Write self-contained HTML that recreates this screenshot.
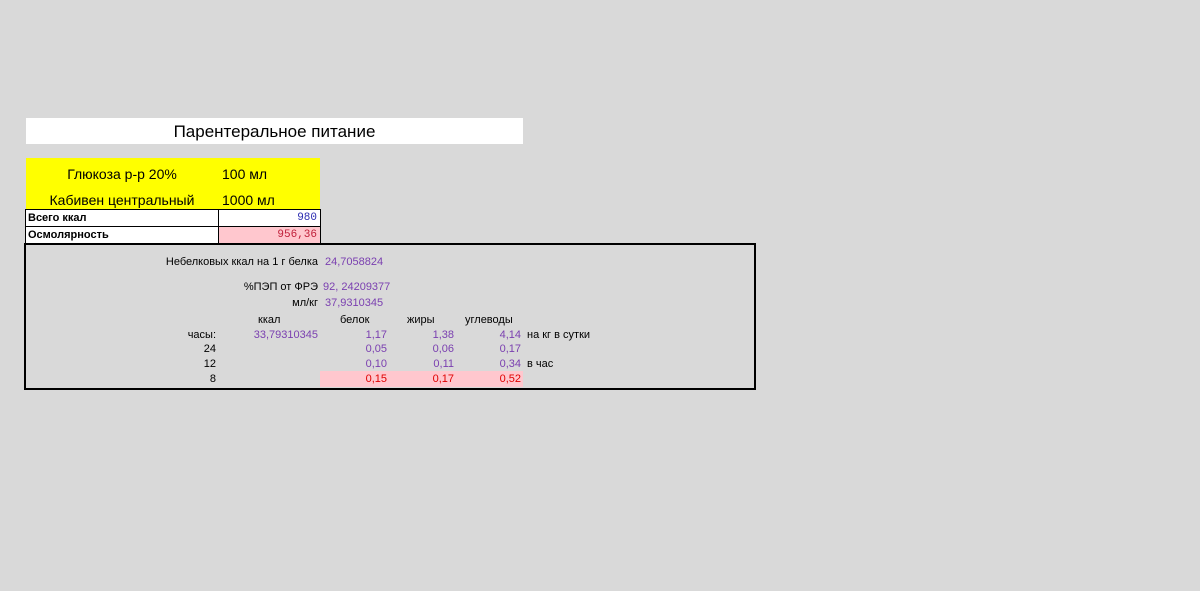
<!DOCTYPE html>
<html><head><meta charset="utf-8"><style>
body{margin:0;width:1200px;height:591px;background:#d9d9d9;position:relative;overflow:hidden;font-family:"Liberation Sans","DejaVu Sans",sans-serif;}
div{position:absolute;box-sizing:border-box;}
.t{font-size:11px;line-height:13px;white-space:nowrap;color:#000;}
.r{text-align:right;}
.p{color:#7a3fb0;}
.red{color:#e00000;}
</style></head><body>
<div style="left:26px;top:118px;width:497px;height:26px;background:#fff;"></div>
<div class="t" style="left:26px;top:122px;width:497px;text-align:center;font-size:17px;line-height:20px;">Парентеральное питание</div>

<div style="left:26px;top:158px;width:294px;height:52px;background:#ffff00;"></div>
<div class="t" style="left:26px;top:166px;width:192px;text-align:center;font-size:14px;line-height:17px;">Глюкоза р-р 20%</div>
<div class="t" style="left:222px;top:166px;font-size:14px;line-height:17px;">100 мл</div>
<div class="t" style="left:26px;top:192px;width:192px;text-align:center;font-size:14px;line-height:17px;">Кабивен центральный</div>
<div class="t" style="left:222px;top:192px;font-size:14px;line-height:17px;">1000 мл</div>

<div style="left:25px;top:209px;width:296px;height:36px;background:#fff;border:1px solid #000;"></div>
<div style="left:218px;top:227px;width:102px;height:17px;background:#ffc7ce;"></div>
<div style="left:25px;top:226px;width:296px;height:1px;background:#000;"></div>
<div style="left:218px;top:209px;width:1px;height:36px;background:#000;"></div>
<div class="t" style="left:28px;top:212px;font-weight:bold;">Всего ккал</div>
<div class="t" style="left:28px;top:229px;font-weight:bold;">Осмолярность</div>
<div class="t r" style="left:220px;top:212px;width:97px;font-family:'Liberation Mono',monospace;color:#2a2ab0;">980</div>
<div class="t r" style="left:220px;top:229px;width:97px;font-family:'Liberation Mono',monospace;color:#c0203a;">956,36</div>

<div style="left:24px;top:243px;width:732px;height:147px;border:2px solid #000;"></div>
<div style="left:320px;top:371px;width:203px;height:16px;background:#ffc7ce;"></div>

<div class="t r" style="left:100px;top:256px;width:218px;">Небелковых ккал на 1 г белка</div>
<div class="t p" style="left:325px;top:256px;">24,7058824</div>
<div class="t r" style="left:100px;top:281px;width:218px;">%ПЭП от ФРЭ</div>
<div class="t p" style="left:323px;top:281px;">92, 24209377</div>
<div class="t r" style="left:100px;top:297px;width:218px;">мл/кг</div>
<div class="t p" style="left:325px;top:297px;">37,9310345</div>

<div class="t" style="left:258px;top:314px;">ккал</div>
<div class="t" style="left:340px;top:314px;">белок</div>
<div class="t" style="left:407px;top:314px;">жиры</div>
<div class="t" style="left:465px;top:314px;">углеводы</div>

<div class="t r" style="left:150px;top:329px;width:66px;">часы:</div>
<div class="t r p" style="left:220px;top:329px;width:98px;">33,79310345</div>
<div class="t r p" style="left:330px;top:329px;width:57px;">1,17</div>
<div class="t r p" style="left:400px;top:329px;width:54px;">1,38</div>
<div class="t r p" style="left:460px;top:329px;width:61px;">4,14</div>
<div class="t" style="left:527px;top:329px;">на кг в сутки</div>

<div class="t r" style="left:150px;top:343px;width:66px;">24</div>
<div class="t r p" style="left:330px;top:343px;width:57px;">0,05</div>
<div class="t r p" style="left:400px;top:343px;width:54px;">0,06</div>
<div class="t r p" style="left:460px;top:343px;width:61px;">0,17</div>

<div class="t r" style="left:150px;top:358px;width:66px;">12</div>
<div class="t r p" style="left:330px;top:358px;width:57px;">0,10</div>
<div class="t r p" style="left:400px;top:358px;width:54px;">0,11</div>
<div class="t r p" style="left:460px;top:358px;width:61px;">0,34</div>
<div class="t" style="left:527px;top:358px;">в час</div>

<div class="t r" style="left:150px;top:373px;width:66px;">8</div>
<div class="t r red" style="left:330px;top:373px;width:57px;">0,15</div>
<div class="t r red" style="left:400px;top:373px;width:54px;">0,17</div>
<div class="t r red" style="left:460px;top:373px;width:61px;">0,52</div>
</body></html>
